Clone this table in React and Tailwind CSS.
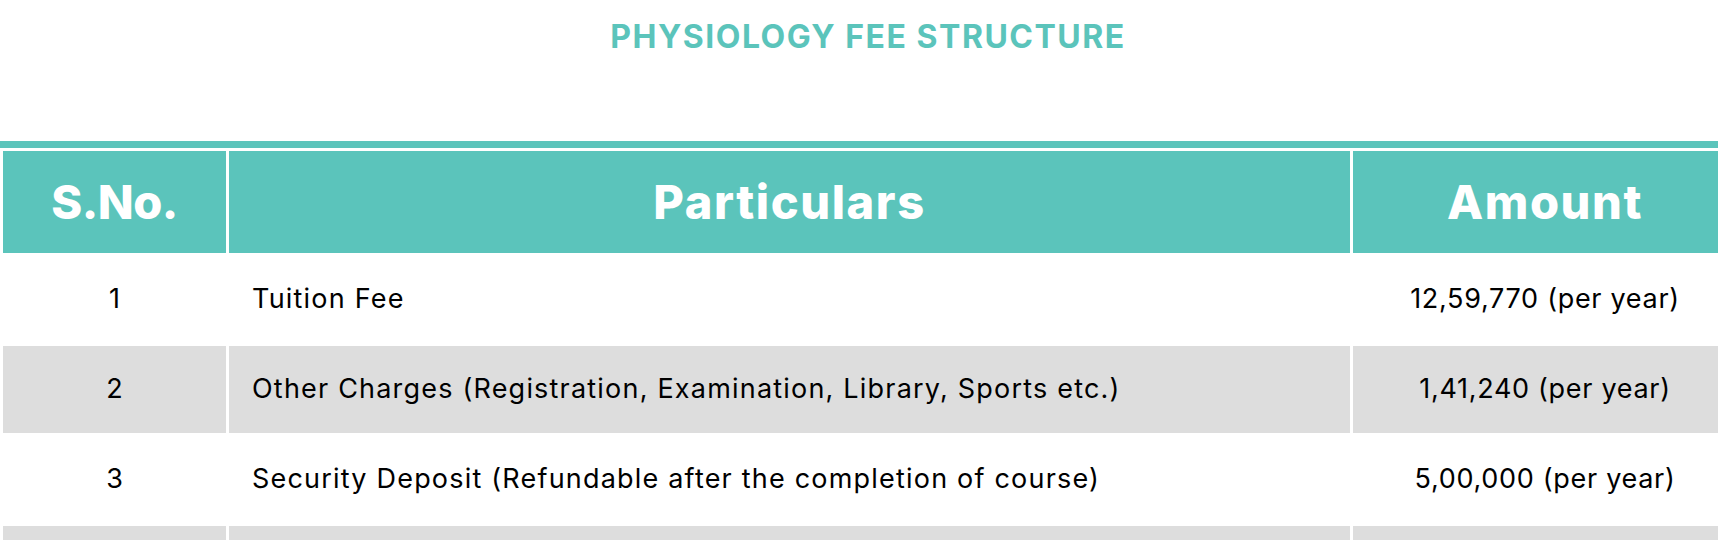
import React from "react";

const rows = [
  { sn: "1", item: "Tuition Fee", amount: "12,59,770 (per year)", gray: false },
  { sn: "2", item: "Other Charges (Registration, Examination, Library, Sports etc.)", amount: "1,41,240 (per year)", gray: true },
  { sn: "3", item: "Security Deposit (Refundable after the completion of course)", amount: "5,00,000 (per year)", gray: false },
  { sn: "", item: "", amount: "", gray: true },
];

export default function App() {
  return (
    <div className="min-h-screen bg-white overflow-hidden font-['Inter',sans-serif] text-black">
      <h2 className="pt-[19px] pl-[18px] text-center text-[32px] leading-[36px] font-bold tracking-[1.5px] text-[#5bc4bb]">
        PHYSIOLOGY FEE STRUCTURE
      </h2>

      <div className="mt-[86px] w-[1740px]">
        <table className="w-full border-separate border-spacing-[3px] border-t-[7px] border-[#5bc4bb] table-fixed">
          <colgroup>
            <col className="w-[223px]" />
            <col className="w-[1121px]" />
            <col />
          </colgroup>
          <thead>
            <tr className="h-[102px] bg-[#5bc4bb] text-white">
              <th className="text-[47px] font-extrabold tracking-[-0.6px]">S.No.</th>
              <th className="text-[47px] font-extrabold tracking-[1.6px]">Particulars</th>
              <th className="text-[47px] font-extrabold tracking-[1.6px]">Amount</th>
            </tr>
          </thead>
          <tbody>
            {rows.map((r, i) => (
              <tr key={i} className={r.gray ? "h-[87px] bg-[#dddddd]" : "h-[87px] bg-white"}>
                <td className="text-center text-[27px]">{r.sn}</td>
                <td className="pl-[23px] text-[27px] tracking-[1.2px]">{r.item}</td>
                <td className="text-center text-[27px] tracking-[0.7px]">{r.amount}</td>
              </tr>
            ))}
          </tbody>
        </table>
      </div>
    </div>
  );
}
